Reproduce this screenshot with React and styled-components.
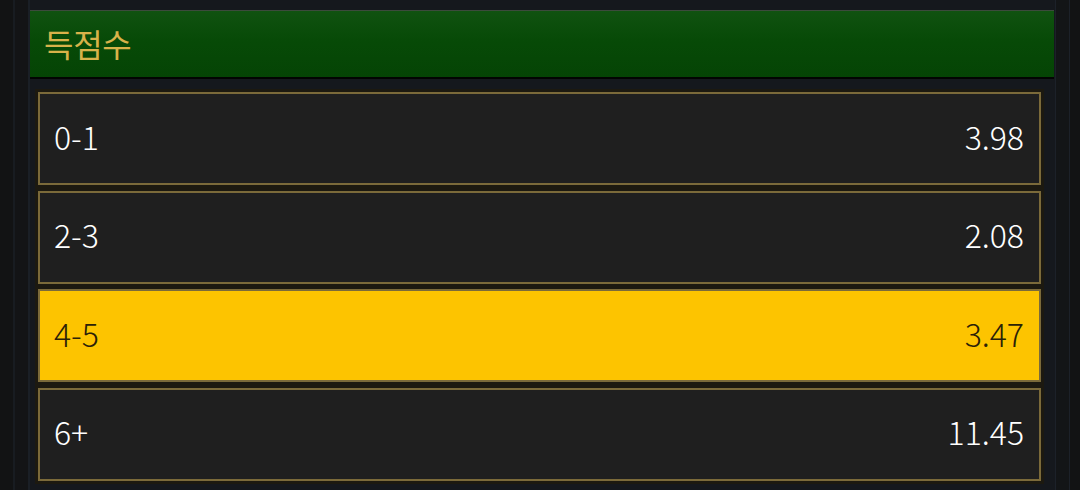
import React from "react";
import styled, { createGlobalStyle } from "styled-components";

const GlobalStyle = createGlobalStyle`
  html, body {
    margin: 0;
    padding: 0;
    background: #121314;
  }
  body {
    font-family: "Noto Sans CJK KR", "Noto Sans", sans-serif;
  }
`;

const options = [
  { label: "0-1", odds: "3.98" },
  { label: "2-3", odds: "2.08" },
  { label: "4-5", odds: "3.47", selected: true },
  { label: "6+", odds: "11.45" },
];

const Page = styled.div`
  width: 1080px;
  height: 490px;
  overflow: hidden;
  display: flex;
  background: #121314;
`;

const Rail = styled.div`
  width: 13px;
  border-right: 2px solid #181c21;
  flex-shrink: 0;
`;

const Gutter = styled.div`
  width: 13px;
  border-right: 2px solid #1a1f26;
  flex-shrink: 0;
  background: #131416;
`;

const Panel = styled.div`
  width: 1025px;
  flex-shrink: 0;
  background: #15181d;
  padding-top: 10px;
  display: flex;
  flex-direction: column;
`;

const Header = styled.div`
  box-sizing: border-box;
  height: 69px;
  margin-right: 1px;
  border-top: 1px solid #3c4a3c;
  border-bottom: 2px solid #030403;
  background: linear-gradient(to bottom, #105210 0%, #074a07 45%, #054405 100%);
  display: flex;
  align-items: center;
  padding: 0 0 2px 14px;
  color: #d8b24a;
  font-size: 32px;
  letter-spacing: -0.3px;
`;

const List = styled.div`
  display: flex;
  flex-direction: column;
  gap: 5.6px;
  padding: 13px 14px 0 8px;
`;

const Row = styled.div`
  box-sizing: border-box;
  height: 93px;
  border: 2px solid #7b6a3a;
  box-shadow: 0 0 0 3px #1c1910;
  background: ${({ $selected }) => ($selected ? "#fdc400" : "#1f1f1f")};
  color: ${({ $selected }) => ($selected ? "#2a2108" : "#ffffff")};
  display: flex;
  align-items: center;
  justify-content: space-between;
  padding: 0 15px 6px 14px;
  font-size: 32px;
  font-weight: 300;
`;

const Label = styled.span``;

const Odds = styled.span``;

const RightEdge = styled.div`
  width: 13px;
  flex-shrink: 0;
  background: #131517;
  border-left: 1px solid #1c2129;
  border-right: 1px solid #1c2129;
`;

export default function App() {
  return (
    <>
      <GlobalStyle />
      <Page>
        <Rail />
        <Gutter />
        <Panel>
          <Header>득점수</Header>
          <List>
            {options.map((o) => (
              <Row key={o.label} $selected={o.selected}>
                <Label>{o.label}</Label>
                <Odds>{o.odds}</Odds>
              </Row>
            ))}
          </List>
        </Panel>
        <RightEdge />
      </Page>
    </>
  );
}
